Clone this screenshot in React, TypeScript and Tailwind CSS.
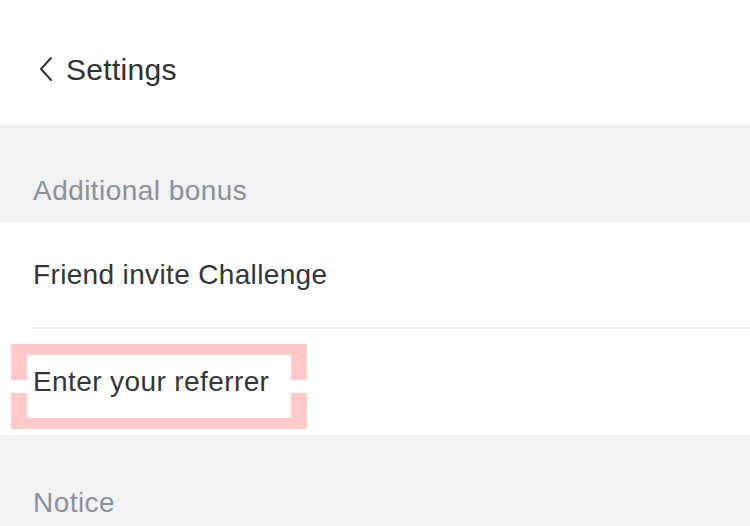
import React from "react";

const font = { fontFamily: '"Liberation Sans", Arial, sans-serif' };

const SectionHeader: React.FC<{ title: string; h: string }> = ({ title, h }) => (
  <div className={`bg-[#f1f2f4] ${h} pt-[35px] pl-[33px] flex items-center`}>
    <span className="text-[28px] text-[#8c9198] tracking-[0.45px]">{title}</span>
  </div>
);

const App: React.FC = () => {
  return (
    <div className="w-[750px] h-[526px] overflow-hidden bg-white" style={font}>
      {/* header */}
      <div className="h-[125px] flex items-center pl-[38px] pt-[13px] gap-[12px]">
        <svg width="16" height="26" viewBox="0 0 16 26" fill="none">
          <path d="M13 2 L3 13 L13 24" stroke="#333639" strokeWidth="2" strokeLinecap="round" strokeLinejoin="round" />
        </svg>
        <span className="text-[30px] text-[#2f3134] tracking-[0.3px]">Settings</span>
      </div>

      <SectionHeader title="Additional bonus" h="h-[97px]" />

      <div className="h-[105px] flex items-center pl-[33px]">
        <span className="text-[28px] text-[#333538] tracking-[0.35px]">Friend invite Challenge</span>
      </div>
      <div className="ml-[32px] h-[2px] bg-[#efeff0]" />

      <div className="relative h-[106px] flex items-center pl-[33px]">
        {/* annotation box */}
        <div className="absolute left-[11px] top-[15px] w-[296px] h-[85px] border-[#ffcaca] border-x-[16px] border-y-[11px]">
          <div className="absolute left-[-16px] top-[25px] w-[16px] h-[13px] bg-white" />
          <div className="absolute right-[-16px] top-[25px] w-[16px] h-[13px] bg-white" />
        </div>
        <span className="relative text-[28px] text-[#333538] tracking-[0.4px]">Enter your referrer</span>
      </div>

      <SectionHeader title="Notice" h="h-[100px]" />
    </div>
  );
};

export default App;
